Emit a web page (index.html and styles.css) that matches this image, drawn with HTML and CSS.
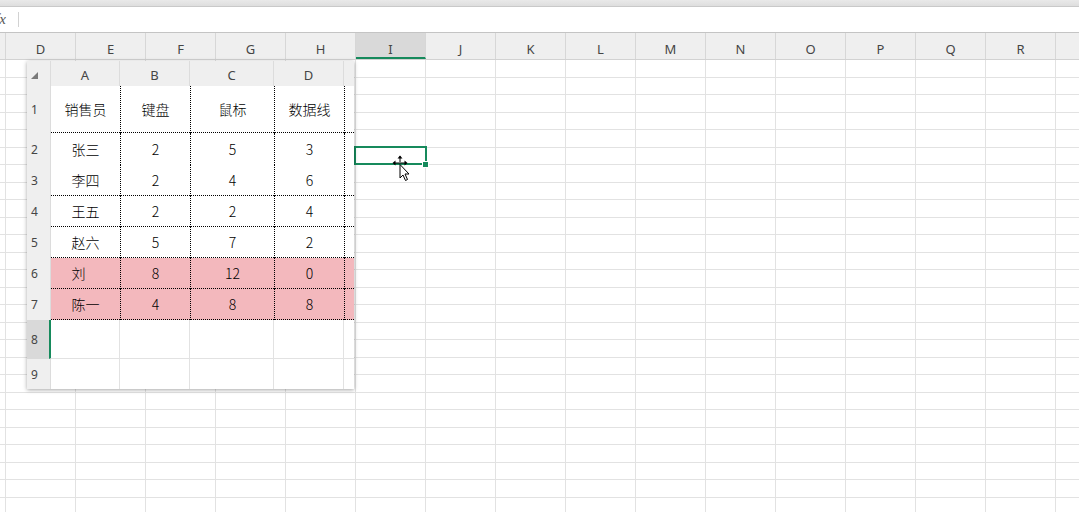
FILE: index.html
```html
<!DOCTYPE html>
<html lang="zh">
<head>
<meta charset="utf-8">
<title>Sheet</title>
<link rel="stylesheet" href="styles.css">
</head>
<body>
<div class="app">
  <div class="topbar"></div>
  <div class="formula"><span class="fx">fx</span><span class="fsep"></span></div>
  <div class="colhdr">
    <div class="ch c0"></div>
    <div class="ch">D</div><div class="ch">E</div><div class="ch">F</div><div class="ch">G</div><div class="ch">H</div>
    <div class="ch sel">I</div><div class="ch">J</div><div class="ch">K</div><div class="ch">L</div><div class="ch">M</div>
    <div class="ch">N</div><div class="ch">O</div><div class="ch">P</div><div class="ch">Q</div><div class="ch">R</div><div class="ch"></div>
  </div>
  <div class="sheet">
    <div class="active-cell"><span class="handle"></span></div>
    <svg class="cursor" width="24" height="32" viewBox="0 0 24 32">
      <path d="M10 3 L10 9 M4 10 L16 10" stroke="#000" stroke-width="1" fill="none"/>
      <path d="M7.5 5.5 L10 2.5 L12.5 5.5 Z" fill="#000"/>
      <path d="M5.5 7.5 L2.5 10 L5.5 12.5 Z" fill="#000"/>
      <path d="M14.5 7.5 L17.5 10 L14.5 12.5 Z" fill="#000"/>
      <path d="M10 11.5 L10 25 L13 22 L15.5 27.5 L17.5 26.5 L15 21 L19 21 Z" fill="#fff" stroke="#000" stroke-width="1" stroke-linejoin="round"/>
    </svg>
  </div>

  <div class="picture">
    <div class="pic-grid">
      <div class="ph corner"><svg width="7" height="7" viewBox="0 0 7 7"><path d="M7 0 L7 7 L0 7 Z" fill="#7a7a7a"/></svg></div>
      <div class="ph">A</div><div class="ph">B</div><div class="ph">C</div><div class="ph">D</div><div class="ph last"></div>

      <div class="rh">1</div>
      <div class="cd b-b">销售员</div><div class="cd b-r b-b">键盘</div><div class="cd b-r b-b">鼠标</div><div class="cd b-r b-b">数据线</div><div class="cd b-r b-b sliver"></div>

      <div class="rh">2</div>
      <div class="cd">张三</div><div class="cd b-r">2</div><div class="cd b-r">5</div><div class="cd b-r">3</div><div class="cd b-r sliver"></div>

      <div class="rh">3</div>
      <div class="cd b-b">李四</div><div class="cd b-r b-b">2</div><div class="cd b-r b-b">4</div><div class="cd b-r b-b">6</div><div class="cd b-r b-b sliver"></div>

      <div class="rh">4</div>
      <div class="cd b-b">王五</div><div class="cd b-r b-b">2</div><div class="cd b-r b-b">2</div><div class="cd b-r b-b">4</div><div class="cd b-r b-b sliver"></div>

      <div class="rh">5</div>
      <div class="cd b-b">赵六</div><div class="cd b-r b-b">5</div><div class="cd b-r b-b">7</div><div class="cd b-r b-b">2</div><div class="cd b-r b-b sliver"></div>

      <div class="rh">6</div>
      <div class="cd pink b-b">刘　</div><div class="cd pink b-r b-b">8</div><div class="cd pink b-r b-b">12</div><div class="cd pink b-r b-b">0</div><div class="cd pink b-r b-b sliver"></div>

      <div class="rh">7</div>
      <div class="cd pink b-b">陈一</div><div class="cd pink b-r b-b">4</div><div class="cd pink b-r b-b">8</div><div class="cd pink b-r b-b">8</div><div class="cd pink b-r b-b sliver"></div>

      <div class="rh rsel">8</div>
      <div class="cd g-b g-r selleft"></div><div class="cd g-b g-r"></div><div class="cd g-b g-r"></div><div class="cd g-b g-r"></div><div class="cd g-b sliver"></div>

      <div class="rh">9</div>
      <div class="cd g-r"></div><div class="cd g-r"></div><div class="cd g-r"></div><div class="cd g-r"></div><div class="cd sliver"></div>
    </div>
  </div>
</div>
</body>
</html>
```

FILE: styles.css
```css
* { box-sizing: border-box; }
html, body { margin: 0; padding: 0; }
body {
  width: 1079px;
  height: 512px;
  overflow: hidden;
  background: #fff;
  font-family: "Noto Sans", "Noto Sans CJK SC", sans-serif;
}
.app {
  position: relative;
  width: 1079px;
  height: 512px;
  overflow: hidden;
}
.topbar {
  height: 7px;
  background: linear-gradient(#e9e9e9, #dedede);
  border-bottom: 1px solid #c9c9c9;
}
.formula {
  height: 26px;
  background: #fff;
  border-bottom: 1px solid #c4c4c4;
  display: flex;
  align-items: center;
}
.fx {
  margin-left: -5px;
  font-family: "Liberation Serif", serif;
  font-style: italic;
  font-size: 15px;
  color: #555;
  width: 21px;
}
.fsep {
  width: 1px;
  height: 15px;
  background: #d2d2d2;
  margin-left: 2px;
}
.colhdr {
  display: flex;
  height: 27px;
  background: #efefef;
  border-bottom: 1px solid #d2d2d2;
}
.ch {
  flex: 0 0 70px;
  border-right: 1px solid #d7d7d7;
  font-size: 13px;
  color: #454545;
  display: flex;
  align-items: center;
  justify-content: center;
  padding-top: 5px;
}
.ch.c0 { flex-basis: 6px; }
.ch.sel {
  background: #d9d9d9;
  border-bottom: 2px solid #168a5c;
  padding-top: 7px;
}
.sheet {
  position: relative;
  height: 452px;
  background-image:
    linear-gradient(to right, #e2e2e2 1px, transparent 1px),
    linear-gradient(to bottom, transparent 17px, #e2e2e2 17px, #e2e2e2 18px, transparent 18px, transparent 34px, #e2e2e2 34px);
  background-size: 70px 100%, 100% 35px;
  background-position: 5px 0, 0 0;
}
.active-cell {
  position: absolute;
  left: 354px;
  top: 86px;
  width: 73px;
  height: 19px;
  border: 2px solid #168a5c;
}
.handle {
  position: absolute;
  right: -4px;
  bottom: -5px;
  width: 7px;
  height: 7px;
  background: #168a5c;
  border: 1px solid #fff;
}
.cursor {
  position: absolute;
  left: 390px;
  top: 93px;
}
.picture {
  position: absolute;
  left: 27px;
  top: 61px;
  width: 327px;
  height: 328px;
  background: #fff;
  box-shadow: 0 1px 4px rgba(0,0,0,0.35);
  overflow: hidden;
}
.pic-grid {
  display: grid;
  grid-template-columns: 24px 69px 70px 84px 70px 10px;
  grid-template-rows: 25px 47px 32px 31px 31px 31px 31px 31px 39px 30px;
}
.ph {
  background: #efefef;
  border-right: 1px solid #dcdcdc;
  font-size: 13px;
  color: #454545;
  display: flex;
  align-items: center;
  justify-content: center;
  padding-top: 2px;
}
.ph.corner {
  justify-content: flex-start;
  align-items: flex-start;
  padding: 11px 0 0 4px;
  border-right: 1px solid #dcdcdc;
}
.ph.last { border-right: none; }
.rh {
  background: #efefef;
  border-right: 1px solid #dcdcdc;
  font-size: 12px;
  color: #454545;
  display: flex;
  align-items: center;
  padding-left: 4px;
}
.rh.rsel { background: #d9d9d9; }
.cd {
  font-family: "Noto Sans CJK SC", "Noto Sans", sans-serif;
  font-weight: 300;
  font-size: 14px;
  color: #000;
  display: flex;
  align-items: center;
  justify-content: center;
  background: #fff;
}
.cd.pink { background: #f3b8bd; }
.b-r { border-left: 1px dotted #000; }
.b-b { border-bottom: 1px dotted #000; }
.g-r { border-right: 1px solid #e2e2e2; }
.g-b { border-bottom: 1px solid #e2e2e2; }
.selleft { border-left: 2px solid #168a5c; margin-left: -2px; }
```
